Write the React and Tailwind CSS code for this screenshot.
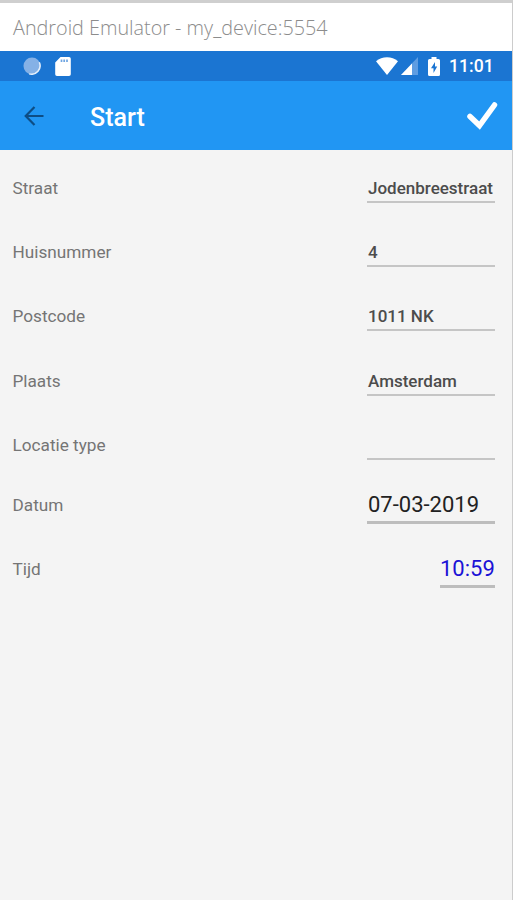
const fields = [
  { label: 'Straat', value: 'Jodenbreestraat' },
  { label: 'Huisnummer', value: '4' },
  { label: 'Postcode', value: '1011 NK' },
  { label: 'Plaats', value: 'Amsterdam' },
  { label: 'Locatie type', value: '' },
]

function StatusBar() {
  return (
    <div className="flex items-center justify-between h-[30px] pl-[23px] pr-5 bg-[#1b75d2] text-white">
      <div className="flex items-center gap-3.5">
        <svg className="w-[18px] h-[18px]" viewBox="0 0 19 19">
          <circle cx="9.5" cy="9.5" r="9" fill="#85b1e6" />
          <path d="M17.2 5.5A9 9 0 0 1 6.5 17.8" fill="none" stroke="#e3eefa" strokeWidth="1.6" />
        </svg>
        <svg className="w-4 h-[19px]" viewBox="0 0 16 19">
          <path d="M5.5 0H14a1.8 1.8 0 0 1 1.8 1.8v15.4A1.8 1.8 0 0 1 14 19H2a1.8 1.8 0 0 1-1.8-1.8V5.5z" fill="#fff" />
          <path d="M6.5 2.5v2.5M9.2 2.5v2.5M12 2.5v2.5" stroke="#6fa5e2" strokeWidth="1.7" />
        </svg>
      </div>
      <div className="flex items-center">
        <svg className="w-[22px] h-[18px]" viewBox="0 0 22 18">
          <path d="M0 4.3C6-1.2 16-1.2 22 4.3L11 18z" fill="#fff" />
        </svg>
        <svg className="w-[17px] h-[18px] ml-[3px]" viewBox="0 0 17 18">
          <path d="M17 0v18H0z" fill="#5f9de2" />
          <path d="M11 6.4V18H0z" fill="#fff" />
        </svg>
        <svg className="w-3 h-[19px] ml-2.5" viewBox="0 0 12 19">
          <path d="M3.5 0h5v2H10.5A1.5 1.5 0 0 1 12 3.5v14A1.5 1.5 0 0 1 10.5 19h-9A1.5 1.5 0 0 1 0 17.5v-14A1.5 1.5 0 0 1 1.5 2h2z" fill="#fff" />
          <path d="M7 5L3 11.2h2.5V16l3.7-6.5H7z" fill="#1b75d2" />
        </svg>
        <span className="ml-[9px] mt-px w-[43px] text-[17.6px] leading-none font-medium whitespace-nowrap">11:01</span>
      </div>
    </div>
  )
}

function AppBar() {
  return (
    <div className="flex items-center h-[69px] pl-6 pr-3.5 bg-[#2196f3]">
      <svg className="w-5 h-5" viewBox="0 0 20 20" fill="none" stroke="#0d4d85" strokeWidth="2.2">
        <path d="M19.5 10H2M10.5 1L1.7 10l8.8 9" />
      </svg>
      <h1 className="ml-[46px] mt-[3px] text-[25px] leading-none font-medium text-white">Start</h1>
      <svg className="ml-auto w-[32px] h-[30px]" viewBox="0 0 32 30">
        <path d="M4 15.5L13.5 24.5 28.5 4" fill="none" stroke="#fff" strokeWidth="5.5" strokeLinecap="round" />
      </svg>
    </div>
  )
}

function Field({ label, value }) {
  return (
    <div className="flex justify-between h-[28px] mb-[36.2px] leading-[28px]">
      <label className="text-[17.2px] text-[#757575]">{label}</label>
      <div className="w-32 h-[29px] pl-px border-b-2 border-[#c5c5c5] text-[17px] font-medium text-[#4c4c4c] whitespace-nowrap">
        {value}
      </div>
    </div>
  )
}

export default function App() {
  return (
    <div className="flex flex-col w-[513px] h-[900px] overflow-hidden border-t-[3px] border-r border-t-[#cfcfcf] border-r-[#cccccc] bg-[#f4f4f4] font-['Roboto',sans-serif]">
      <div className="flex items-center h-12 pt-px pl-[13px] bg-white text-[19.8px] text-[#8c8c8c] font-light font-['Open_Sans',sans-serif] whitespace-nowrap">
        Android Emulator - my_device:5554
      </div>
      <StatusBar />
      <AppBar />
      <div className="pl-[12.5px] pr-[17px] pt-[24px]">
        {fields.map((f) => (
          <Field key={f.label} label={f.label} value={f.value} />
        ))}
        <div className="flex justify-between h-16 -mt-[4px] leading-[28px]">
          <label className="text-[17.2px] text-[#757575]">Datum</label>
          <div className="w-32 h-[33px] pl-px border-b-[3px] border-[#bdbdbd] text-[22px] leading-[28px] text-[#222]">07-03-2019</div>
        </div>
        <div className="flex justify-between h-16 leading-[28px]">
          <label className="text-[17.2px] text-[#757575]">Tijd</label>
          <div className="w-[55px] h-[33px] border-b-[3px] border-[#bdbdbd] text-[22px] leading-[28px] text-[#1b12d6]">10:59</div>
        </div>
      </div>
    </div>
  )
}
